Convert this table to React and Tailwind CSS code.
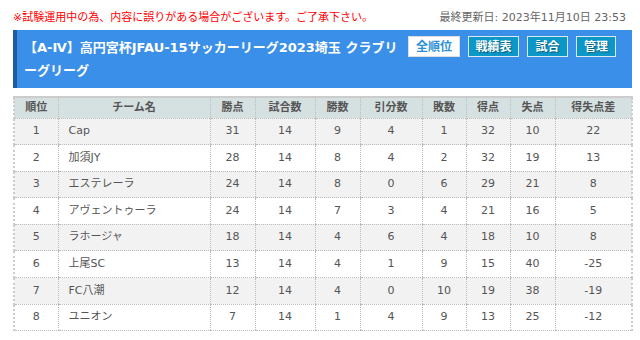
import React from 'react';

const rows = [
  [1, 'Cap', 31, 14, 9, 4, 1, 32, 10, 22],
  [2, '加須JY', 28, 14, 8, 4, 2, 32, 19, 13],
  [3, 'エステレーラ', 24, 14, 8, 0, 6, 29, 21, 8],
  [4, 'アヴェントゥーラ', 24, 14, 7, 3, 4, 21, 16, 5],
  [5, 'ラホージャ', 18, 14, 4, 6, 4, 18, 10, 8],
  [6, '上尾SC', 13, 14, 4, 1, 9, 15, 40, -25],
  [7, 'FC八潮', 12, 14, 4, 0, 10, 19, 38, -19],
  [8, 'ユニオン', 7, 14, 1, 4, 9, 13, 25, -12],
];

const heads = ['順位', 'チーム名', '勝点', '試合数', '勝数', '引分数', '敗数', '得点', '失点', '得失点差'];
const widths = [44, 152, 45, 60, 45, 62, 44, 44, 45, 77];

const App = () => {
  return (
    <div className="w-[640px] h-[340px] bg-white overflow-hidden pl-[13px] pr-[8px] pt-[11px] font-['DejaVu_Sans','Noto_Sans_CJK_JP',sans-serif]">
      <div className="flex items-center justify-between h-[15px] pr-[6px]">
        <p className="text-[11px] text-[#f00]">※試験運用中の為、内容に誤りがある場合がございます。ご了承下さい。</p>
        <p className="text-[11px] text-[#666]">最終更新日: 2023年11月10日 23:53</p>
      </div>

      <div className="mt-[4px] h-[58px] bg-[#3a8fe8] border-l-[4px] border-[#1b5d9f] flex items-start pl-[7px] pr-[16px]">
        <h1 className="pt-[6px] text-[13px] leading-[23px] font-bold text-white whitespace-nowrap">
          【A-Ⅳ】高円宮杯JFAU-15サッカーリーグ2023埼玉 クラブリ
          <br />
          ーグリーグ
        </h1>
        <div className="ml-auto mt-[6px] flex gap-[8px]">
          <button className="h-[21px] w-[52px] bg-white border border-[#ddd] text-[12px] font-bold text-[#2d8fd6]">全順位</button>
          <button className="h-[21px] w-[51px] bg-[#0b98c9] border border-[#dde9ee] text-[12px] font-bold text-white [text-shadow:1px_1px_1px_rgba(0,0,0,0.4)]">戦績表</button>
          <button className="h-[21px] w-[41px] bg-[#0b98c9] border border-[#dde9ee] text-[12px] font-bold text-white [text-shadow:1px_1px_1px_rgba(0,0,0,0.4)]">試合</button>
          <button className="h-[21px] w-[40px] bg-[#0b98c9] border border-[#dde9ee] text-[12px] font-bold text-white [text-shadow:1px_1px_1px_rgba(0,0,0,0.4)]">管理</button>
        </div>
      </div>

      <table className="mt-[8px] w-[618px] border-collapse table-fixed text-[11px] text-[#555]">
        <colgroup>
          {widths.map((w, i) => (
            <col key={i} style={{ width: w }} />
          ))}
        </colgroup>
        <thead>
          <tr className="h-[21px] bg-[#d5e0e0] border-t-2 border-[#ccc]">
            {heads.map((h, i) => (
              <th
                key={h}
                className={`font-bold text-[11px] text-[#555] border-dotted border-[#bbb] ${i === 0 ? 'border-l-2 border-l-solid border-l-[#ccc]' : 'border-l'} ${i === 9 ? 'border-r-2 border-r-solid border-r-[#ccc]' : ''}`}
              >
                {h}
              </th>
            ))}
          </tr>
        </thead>
        <tbody>
          {rows.map((r, ri) => (
            <tr key={ri} className={`h-[26.6px] ${ri % 2 === 0 ? 'bg-[#f2f2f2]' : 'bg-white'}`}>
              {r.map((c, i) => (
                <td
                  key={i}
                  className={`border-t border-b border-dotted border-[#bbb] ${i === 1 ? 'text-left pl-[10px]' : 'text-center'} ${i === 0 ? 'border-l-2 border-l-solid border-l-[#ccc]' : 'border-l'} ${i === 9 ? 'border-r-2 border-r-solid border-r-[#ccc]' : ''}`}
                >
                  {c}
                </td>
              ))}
            </tr>
          ))}
        </tbody>
      </table>
    </div>
  );
};

export default App;
